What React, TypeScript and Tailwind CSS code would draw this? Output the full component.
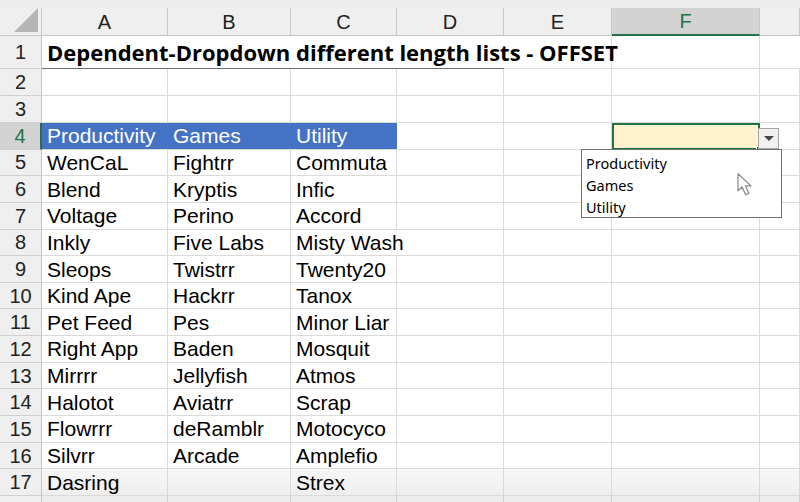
import React from "react";

const cols = [
    { name: "A", w: "w-[126px]" },
    { name: "B", w: "w-[123px]" },
    { name: "C", w: "w-[106px]" },
    { name: "D", w: "w-[107px]" },
    { name: "E", w: "w-[108px]" },
    { name: "F", w: "w-[148px]" },
    { name: "", w: "w-[40px]" },
];

const data: string[][] = [
    ["Productivity", "Games", "Utility"],
    ["WenCaL", "Fightrr", "Commuta"],
    ["Blend", "Kryptis", "Infic"],
    ["Voltage", "Perino", "Accord"],
    ["Inkly", "Five Labs", "Misty Wash"],
    ["Sleops", "Twistrr", "Twenty20"],
    ["Kind Ape", "Hackrr", "Tanox"],
    ["Pet Feed", "Pes", "Minor Liar"],
    ["Right App", "Baden", "Mosquit"],
    ["Mirrrr", "Jellyfish", "Atmos"],
    ["Halotot", "Aviatrr", "Scrap"],
    ["Flowrrr", "deRamblr", "Motocyco"],
    ["Silvrr", "Arcade", "Amplefio"],
    ["Dasring", "", "Strex"],
];

const font = { fontFamily: '"Liberation Sans", Arial, sans-serif' };

function RowHeader({ n, active, h }: { n?: number; active?: boolean; h: string }) {
    return (
        <div
            className={`w-[42px] shrink-0 ${h} flex items-center justify-center text-[20px] border-b border-[#d0d0d0] ${
                active
                    ? "bg-[#d3d3d3] text-[#217346] border-r-2 border-r-[#217346]"
                    : "bg-[#efefef] text-[#222] border-r border-r-[#c6c6c6]"
            }`}
        >
            {n}
        </div>
    );
}

function Cursor() {
    return (
        <svg
            className="absolute left-[736px] top-[172px] z-30"
            width="21"
            height="25"
            viewBox="0 0 18 22"
        >
            <path
                d="M1.5 1.5 L1.5 16.5 L5.2 13.2 L8.2 20 L11 18.8 L8.1 12.2 L13 12.2 Z"
                fill="#ffffff"
                stroke="#8a8a8a"
                strokeWidth="1.1"
                strokeLinejoin="round"
            />
        </svg>
    );
}

export default function App() {
    return (
        <div className="relative w-[800px] h-[502px] overflow-hidden bg-white" style={font}>
            {/* strip above headers */}
            <div className="h-[8px] bg-[#ececec]" />

            {/* Column headers */}
            <div className="flex h-[28px]">
                <div className="w-[42px] shrink-0 bg-[#efefef] border-r border-b border-[#c6c6c6] relative">
                    <div className="absolute right-[3px] bottom-[3px] w-0 h-0 border-l-[24px] border-l-transparent border-b-[24px] border-b-[#b5b5b5]" />
                </div>
                {cols.map((c, i) => {
                    const active = c.name === "F";
                    return (
                        <div
                            key={i}
                            className={`${c.w} shrink-0 flex items-center justify-center text-[20px] ${
                                active
                                    ? "bg-[#d3d3d3] text-[#217346] border-b-2 border-b-[#217346] border-r border-r-[#c6c6c6]"
                                    : "bg-[#efefef] text-[#222] border-b border-r border-[#c6c6c6]"
                            }`}
                        >
                            {c.name}
                        </div>
                    );
                })}
            </div>

            {/* Row 1 - title */}
            <div className="flex h-[33px]">
                <RowHeader n={1} h="h-[33px]" />
                <div className="w-[462px] shrink-0 border-b border-[#6b6b6b] relative z-10">
                    <span
                        className="absolute left-[5px] top-[0px] whitespace-nowrap text-[22px] font-bold text-black"
                        style={{ fontFamily: '"Open Sans", "Noto Sans", sans-serif' }}
                    >
                        Dependent-Dropdown different length lists - OFFSET
                    </span>
                </div>
                <div className="w-[108px] shrink-0 border-r border-b border-[#dadada]" />
                <div className="w-[148px] shrink-0 border-r border-b border-[#dadada]" />
                <div className="flex-1 border-b border-[#dadada]" />
            </div>

            {/* Rows 2-3 */}
            {[2, 3].map((n) => (
                <div key={n} className="flex h-[27px]">
                    <RowHeader n={n} h="h-[27px]" />
                    {cols.map((c, i) => (
                        <div key={i} className={`${c.w} shrink-0 border-r border-b border-[#dadada]`} />
                    ))}
                </div>
            ))}

            {/* Rows 4-17 */}
            {data.map((row, i) => {
                const n = i + 4;
                const isHead = n === 4;
                const last = n === 17;
                return (
                    <div
                        key={n}
                        className={`flex h-[26.65px] ${last ? "bg-gradient-to-b from-[#f7f7f7] to-[#eeeeee]" : ""}`}
                    >
                        <RowHeader n={n} h="h-[26.65px]" active={isHead} />
                        {cols.map((c, ci) => {
                            const text = ci < 3 ? row[ci] : "";
                            if (isHead && ci < 3) {
                                return (
                                    <div
                                        key={ci}
                                        className={`${c.w} shrink-0 bg-[#4472c4] text-white text-[21px] leading-none flex items-center pl-[5px] border-b border-[#dadada]`}
                                    >
                                        {text}
                                    </div>
                                );
                            }
                            if (isHead && c.name === "F") {
                                return (
                                    <div
                                        key={ci}
                                        className={`${c.w} shrink-0 relative bg-[#fff2cc] border-2 border-[#217346]`}
                                    >
                                        <div className="absolute right-[-4px] bottom-[-4px] w-[6px] h-[6px] bg-[#217346] border border-white" />
                                        <div className="absolute left-full top-[3px] w-[21px] h-[21px] bg-[#f0f0f0] border border-[#a6a6a6] flex items-center justify-center z-10">
                                            <div className="w-0 h-0 border-l-[5px] border-r-[5px] border-t-[5px] border-l-transparent border-r-transparent border-t-[#444]" />
                                        </div>
                                    </div>
                                );
                            }
                            const overflow = n === 8 && ci === 2;
                            return (
                                <div
                                    key={ci}
                                    className={`${c.w} shrink-0 relative border-b border-[#dadada] ${
                                        overflow ? "" : "border-r border-r-[#dadada]"
                                    } flex items-center pl-[5px] text-[21px] leading-none text-black whitespace-nowrap`}
                                >
                                    {text}
                                </div>
                            );
                        })}
                    </div>
                );
            })}

            {/* Row 18 partial */}
            <div className="flex h-[20px] bg-[#ececec]">
                <RowHeader h="h-[20px]" />
                {cols.map((c, i) => (
                    <div key={i} className={`${c.w} shrink-0 border-r border-[#d0d0d0]`} />
                ))}
            </div>

            {/* Dropdown list */}
            <div
                className="absolute left-[581px] top-[149px] w-[201px] h-[69px] bg-white border border-[#6e6e6e] pl-[4px] pt-[2px] text-[14.5px] text-black leading-[22px] z-20"
                style={{ fontFamily: '"Noto Sans", "Open Sans", sans-serif' }}
            >
                <div>Productivity</div>
                <div>Games</div>
                <div>Utility</div>
            </div>

            <Cursor />
        </div>
    );
}
